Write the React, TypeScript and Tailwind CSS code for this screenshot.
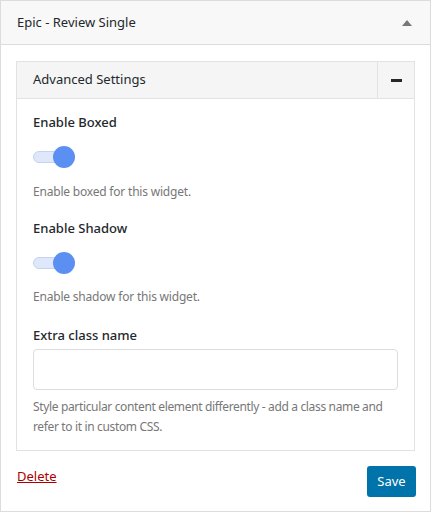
export default function App() {
  const font = { fontFamily: '"Noto Sans", "Segoe UI", sans-serif' };

  const Toggle = () => (
    <div className="relative h-[22px] w-[44px]">
      <div className="absolute left-0 top-[5px] h-[12px] w-[38px] rounded-full border border-[#c5d3f0] bg-[#dfe7fa]" />
      <div className="absolute left-[20px] top-0 h-[22px] w-[22px] rounded-full bg-[#5b8ff2]" />
    </div>
  );

  return (
    <div className="h-[513px] w-[432px] bg-white" style={font}>
      <div className="flex h-[512px] w-[431px] flex-col border border-[#dcdcde] bg-white">
        <div className="flex h-[44px] items-center justify-between border-b border-[#dcdcde] bg-[#f8f8f8] pl-[16px] pr-[16px]">
          <span className="text-[13px] text-[#23282d]">Epic - Review Single</span>
          <svg width="10" height="6" viewBox="0 0 10 6" className="mr-[2px]">
            <path d="M5 0 L10 6 L0 6 Z" fill="#777" />
          </svg>
        </div>

        <div className="px-[15px] pt-[16px]">
          <div className="border border-[#e2e2e2]">
            <div className="flex h-[37px] items-stretch border-b border-[#e2e2e2] bg-[#f5f5f5]">
              <div className="flex flex-1 items-center pl-[16px] text-[13px] text-[#23282d]">
                Advanced Settings
              </div>
              <div className="flex w-[37px] items-center justify-center border-l border-[#e2e2e2]">
                <div className="h-[3px] w-[11px] bg-[#23282d]" />
              </div>
            </div>

            <div className="px-[16px] pb-[13px] pt-[13px]">
              <div className="text-[13px] font-medium leading-[20px] text-[#23282d]">Enable Boxed</div>
              <div className="mt-[14px]"><Toggle /></div>
              <div className="mt-[14px] text-[12px] leading-[20px] tracking-[-0.2px] text-[#777]">Enable boxed for this widget.</div>

              <div className="mt-[16px] text-[13px] font-medium leading-[20px] text-[#23282d]">Enable Shadow</div>
              <div className="mt-[14px]"><Toggle /></div>
              <div className="mt-[13px] text-[12px] leading-[20px] tracking-[-0.2px] text-[#777]">Enable shadow for this widget.</div>

              <div className="mt-[18px] text-[13px] font-medium leading-[20px] text-[#23282d]">Extra class name</div>
              <input
                type="text"
                className="mt-[4px] block h-[41px] w-full rounded-[4px] border border-[#dddddd] bg-white outline-none"
              />
              <div className="mt-[7px] text-[12px] leading-[20px] tracking-[-0.35px] text-[#777]">
                Style particular content element differently - add a class name and refer to it in custom CSS.
              </div>
            </div>
          </div>
        </div>

        <div className="flex items-start justify-between pl-[16px] pr-[14px] pt-[15px]">
          <a href="#" className="mt-[1px] text-[13px] text-[#a00] underline">Delete</a>
          <button className="h-[31px] w-[49px] rounded-[3px] bg-[#0073aa] text-[13px] text-white">Save</button>
        </div>
      </div>
    </div>
  );
}
